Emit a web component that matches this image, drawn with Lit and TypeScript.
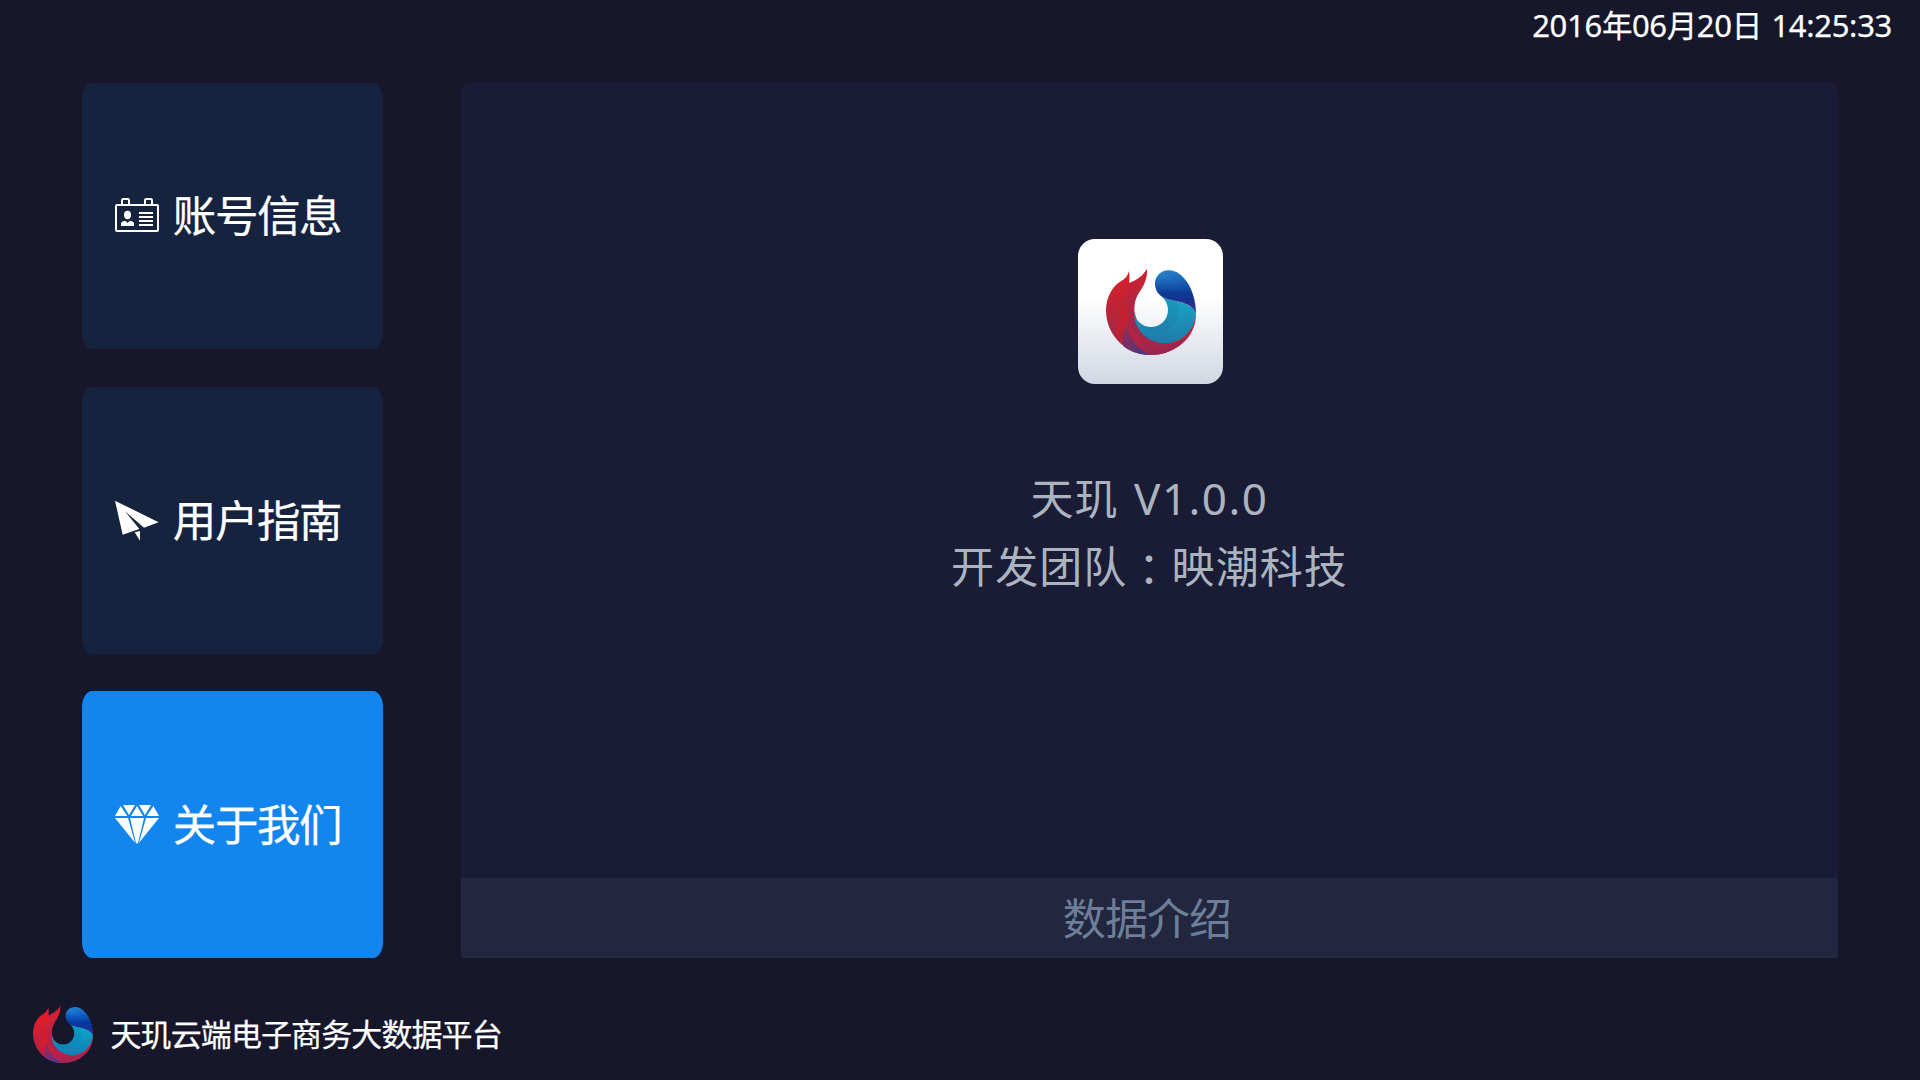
import { LitElement, html, css, svg } from "lit";
import { customElement, property } from "lit/decorators.js";

@customElement("brand-logo")
export class BrandLogo extends LitElement {
  @property({ type: Boolean, reflect: true }) vivid = false;

  static styles = css`
    :host { display: block; }
    :host([vivid]) { filter: saturate(1.15); }
    svg { display: block; width: 100%; height: 100%; }
  `;

  render() {
    return html`<svg viewBox="138 147 270 258" preserveAspectRatio="none">
      <defs>
        <linearGradient id="red" x1="0" y1="0" x2="0" y2="1">
          <stop offset="0" stop-color="#d8202a" />
          <stop offset=".3" stop-color="#c8232f" />
          <stop offset=".7" stop-color="#a82742" />
          <stop offset="1" stop-color="#8b2a58" />
        </linearGradient>
        <linearGradient id="inner" x1="0" y1="0" x2="0" y2="1">
          <stop offset="0" stop-color="#c9222f" />
          <stop offset=".5" stop-color="#a9284a" />
          <stop offset="1" stop-color="#8a2c5c" />
        </linearGradient>
        <linearGradient id="flame" x1="0" y1="0" x2="0" y2="1">
          <stop offset="0" stop-color="#cf2031" />
          <stop offset="1" stop-color="#9c2750" />
        </linearGradient>
        <linearGradient id="violet" x1="0" y1="0" x2=".6" y2="1">
          <stop offset="0" stop-color="#a62848" />
          <stop offset="1" stop-color="#55347c" />
        </linearGradient>
        <linearGradient id="blue" x1="0" y1="0" x2="0" y2="1">
          <stop offset="0" stop-color="#2f8bd0" />
          <stop offset=".25" stop-color="#1c68ba" />
          <stop offset=".55" stop-color="#0c3894" />
          <stop offset=".75" stop-color="#1c2f8e" />
          <stop offset="1" stop-color="#4b3080" />
        </linearGradient>
        <linearGradient id="teal" x1="0" y1="0" x2="0" y2="1">
          <stop offset="0" stop-color="#17a9c6" />
          <stop offset="1" stop-color="#2079a9" />
        </linearGradient>
      </defs>
      <path fill="url(#red)" d="M207 153C204 166 197 176 184 183C156 199 138 233 138 271C138 346 198 405 273 405C345 405 405 350 408 285L300 342L236 318L223 275C222 250 227 235 236 219C252 198 262 175 261 147C250 166 230 183 207 189C209 178 209 166 207 153Z" />
      <path fill="url(#inner)" d="M207 189C230 183 250 166 261 147C262 175 252 198 236 219C226 235 222 250 223 275C226 320 255 350 300 360L262 370C225 350 207 325 207 290C207 268 200 255 192 248C203 230 210 212 207 189Z" opacity=".7" />
      <path fill="#c7202e" opacity=".7" d="M206 250C186 265 168 290 167 325C166 345 172 362 187 375C184 345 202 325 206 300Z" />
      <path fill="url(#violet)" d="M207 305C194 324 184 342 187 360C188 370 189 377 192 380C215 397 244 405 270 405C236 386 206 355 207 312Z" />
      <path fill="url(#flame)" d="M207 312C214 335 240 352 270 362L315 366C360 366 390 345 407 300C395 366 335 405 273 405C235 388 203 355 207 312Z" />
      <path fill="#8c2953" opacity=".3" d="M232 352C290 392 355 382 398 335C372 384 310 398 275 405C265 390 240 370 232 352Z" />
      <path fill="url(#teal)" d="M303 228C330 246 385 240 408 275C406 330 365 370 315 370C265 370 222 330 222 275C226 302 246 321 273 321C301 321 324 300 324 270C324 255 318 240 303 228Z" />
      <path fill="#1b759f" opacity=".25" d="M303 228C318 238 335 240 349 243C366 275 352 336 290 336C262 336 235 322 222 280C226 302 246 321 273 321C301 321 324 300 324 270C324 255 318 240 303 228Z" />
      <path fill="url(#blue)" d="M303 228C292 220 285 207 285 190C285 168 303 151 326 151C372 151 408 215 408 280C402 258 370 246 345 242C325 239 312 235 303 228Z" />
      <path fill="#0c3894" opacity=".15" d="M303 157C335 165 360 190 378 222C390 240 402 255 408 276C408 215 372 151 326 151C317 151 309 153 303 157Z" />
    </svg>`;
  }
}

const icons = {
  card: svg`<g transform="translate(-135 -372)">
    <rect x="138" y="408" width="126" height="78" rx="3" fill="none" stroke="#fff" stroke-width="6" />
    <path fill="none" stroke="#fff" stroke-width="6" d="M156 408V394Q156 390 160 390H173Q177 390 177 394V408M225 408V394Q225 390 229 390H242Q246 390 246 394V408" />
    <ellipse cx="172.500" cy="438" rx="10.500" ry="12.500" fill="#fff" />
    <path fill="#fff" d="M153 471V463Q154 457 165 455L172.500 461L180 455Q191 457 192 463V471Z" />
    <path stroke="#fff" stroke-width="6" d="M207 432H249M207 444H249M207 456H249M207 468H249" />
  </g>`,
  plane: svg`<g transform="translate(-135 -85)" fill="#fff">
    <path d="M135 93L266 158L222 174L165 125L208 178L158 195Z" />
    <path d="M194 188L210 184V213Z" />
  </g>`,
  gem: svg`<g transform="translate(-135 -366)" fill="#fff">
    <path d="M152 378L135 408H172ZM159 375H195L177 405ZM201 378L183 408H219ZM207 375H243L225 405ZM250 378L230 408H267Z" />
    <path d="M135 414H174L195 488ZM180 414H222L204 490H198ZM228 414H267L207 488Z" />
  </g>`,
};

@customElement("menu-tile")
export class MenuTile extends LitElement {
  @property() icon: keyof typeof icons = "card";
  @property() label = "";
  @property({ type: Boolean, reflect: true }) active = false;

  static styles = css`
    :host {
      display: flex;
      align-items: center;
      gap: 13.8px;
      box-sizing: border-box;
      padding: 0 0 1.6px 33px;
      border-radius: 10px / 16px;
      background: #16233f;
      color: #fff;
      font-size: 43.5px;
      letter-spacing: -1.4px;
      line-height: 60px;
      -webkit-text-stroke: 0.25px currentColor;
      cursor: pointer;
    }
    :host([active]) { background: #1285ef; }
    .icon { width: 44px; height: 44px; flex: none; }
    .label { white-space: nowrap; }
  `;

  render() {
    return html`<svg class="icon" viewBox="0 0 132 132">${icons[this.icon]}</svg>
      <span class="label">${this.label}</span>`;
  }
}

@customElement("app-root")
export class AppRoot extends LitElement {
  static styles = css`
    :host {
      display: grid;
      grid-template-rows: 82px 876px 1fr;
      width: 1920px;
      height: 1080px;
      overflow: hidden;
      background: #17172b;
      color: #fff;
      font-family: "Noto Sans", "Noto Sans CJK SC", sans-serif;
    }
    .clock {
      padding-right: 28px;
      text-align: right;
      font-size: 31px;
      line-height: 51px;
      letter-spacing: -0.3px;
      word-spacing: 2px;
      white-space: pre;
      -webkit-text-stroke: 0.25px currentColor;
    }
    .han { font-size: 30.5px; letter-spacing: -0.5px; }
    .main {
      display: grid;
      grid-template-columns: 301px 1377px;
      column-gap: 78px;
      padding-left: 82px;
    }
    .menu {
      display: grid;
      grid-template-rows: repeat(3, 266.4px);
      row-gap: 37.8px;
      padding-top: 1px;
    }
    .panel {
      display: flex;
      flex-direction: column;
      align-items: center;
      border-radius: 10px 10px 2px 2px;
      background: #1a1b35;
      overflow: hidden;
    }
    .badge {
      box-sizing: border-box;
      width: 145px;
      height: 145px;
      margin: 157px 0 0 2px;
      padding: 30px 27px 29px 28px;
      border-radius: 17px;
      background: linear-gradient(#fff 40%, #d1d7e2);
    }
    .about {
      flex: 1;
      padding-top: 81px;
      color: #abb3bf;
      font-size: 43px;
      line-height: 67px;
      letter-spacing: 1.1px;
      text-align: center;
      white-space: pre;
    }
    .team { line-height: 65px; }
    .version { padding-left: 3px; font-size: 44px; letter-spacing: 1.5px; }
    .colon { position: relative; top: 3px; font-family: "Noto Sans CJK TC", sans-serif; }
    .bar {
      align-self: stretch;
      height: 80px;
      box-sizing: border-box;
      padding-right: 5px;
      border-bottom: 1px solid #2b2d45;
      background: #22263f;
      color: #6d7f98;
      font-size: 43px;
      letter-spacing: -0.9px;
      line-height: 82px;
      text-align: center;
    }
    .footer {
      display: flex;
      align-items: flex-start;
      padding: 48px 0 0 33px;
      font-size: 31px;
      letter-spacing: -0.9px;
      line-height: 57px;
      -webkit-text-stroke: 0.25px currentColor;
    }
    .mark { width: 60px; height: 57px; margin-right: 17.5px; }
    .art { width: 90px; height: 86px; }
  `;

  private version = "V1.0.0";

  render() {
    const h = (t: string) => html`<span class="han">${t}</span>`;
    return html`
      <div class="clock">2016${h("年")}06${h("月")}20${h("日")} 14:25:33</div>
      <div class="main">
        <nav class="menu">
          <menu-tile icon="card" label="账号信息"></menu-tile>
          <menu-tile icon="plane" label="用户指南"></menu-tile>
          <menu-tile icon="gem" label="关于我们" active></menu-tile>
        </nav>
        <section class="panel">
          <div class="badge"><brand-logo class="art"></brand-logo></div>
          <div class="about"><div>天玑 <span class="version">${this.version}</span></div><div class="team">开发团队<span class="colon">：</span>映潮科技</div></div>
          <div class="bar">数据介绍</div>
        </section>
      </div>
      <div class="footer"><brand-logo class="mark" vivid></brand-logo><span>天玑云端电子商务大数据平台</span></div>
    `;
  }
}
